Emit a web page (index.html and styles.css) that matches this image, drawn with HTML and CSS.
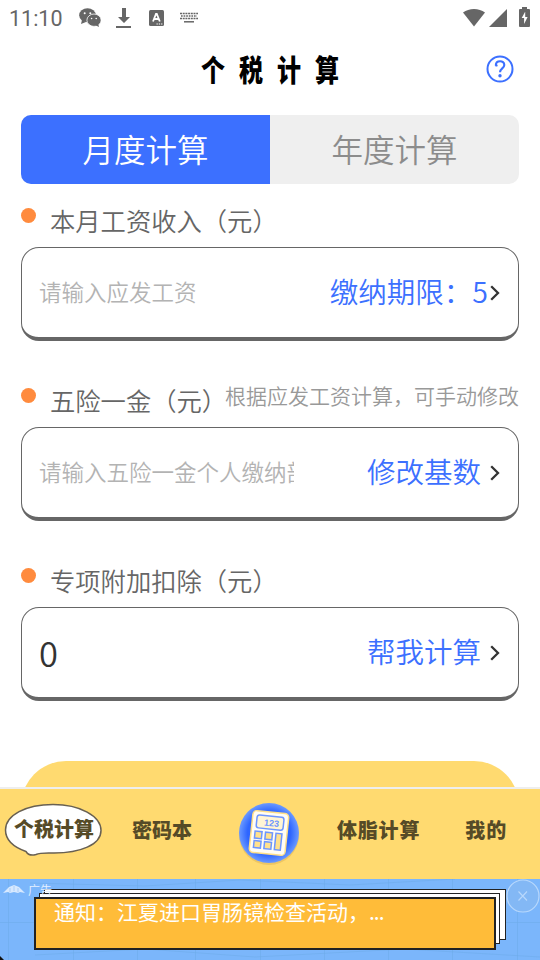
FILE: index.html
```html
<!DOCTYPE html>
<html lang="zh-CN">
<head>
<meta charset="utf-8">
<title>个税计算</title>
<link rel="stylesheet" href="styles.css">
</head>
<body>
<header class="status">
  <span class="clock">11:10</span>
  <svg class="wechat" width="22" height="20" viewBox="0 0 22 20"><g fill="#666"><ellipse cx="8.5" cy="7.3" rx="8.3" ry="7"/><path d="M3 12l-1 4 5-2z"/></g><ellipse cx="15" cy="12.2" rx="7.1" ry="6.2" fill="#666" stroke="#fff" stroke-width=".8"/><path d="M16 17l4 2-1-4z" fill="#666"/><g fill="#fff"><circle cx="5.7" cy="5.3" r="1"/><circle cx="11.3" cy="5.3" r="1"/><circle cx="12.6" cy="10.5" r=".8"/><circle cx="17.2" cy="10.5" r=".8"/></g></svg>
  <svg class="download" width="16" height="22" viewBox="0 0 16 22"><path d="M6 1h4v9h4l-6 6-6-6h4zM0 19h15v2H0z" fill="#666"/></svg>
  <svg class="letter" width="15" height="16" viewBox="0 0 15 16"><rect width="15" height="16" rx="1.5" fill="#666"/><path d="M4 11.5L7 4h.8l3 7.5M5 9h4.8" fill="none" stroke="#fff" stroke-width="1.8"/><path d="M7.5 14h1.3m1 0h1.3m1 0h1.3" stroke="#fff" stroke-width="1.2"/></svg>
  <svg class="keys" width="20" height="12" viewBox="0 0 20 12"><g stroke="#666" stroke-width="1.5"><path d="M1 1.5h18" stroke-dasharray="2 .7"/><path d="M2 4h16" stroke-dasharray="1.7 .9"/><path d="M1 6.5h18" stroke-dasharray="2 .7"/><path d="M5 9.8h10"/></g></svg>
  <span class="grow"></span>
  <svg width="22" height="18" viewBox="0 0 22 18"><path d="M0 3.6C6-1.2 16-1.2 22 3.6L11 17.5z" fill="#666"/></svg>
  <svg class="signal" width="18" height="18" viewBox="0 0 18 18"><path d="M18 0v18H0z" fill="#666"/></svg>
  <svg class="battery" width="11" height="20" viewBox="0 0 11 20"><path d="M3 0h5v2h2q1 0 1 1v16q0 1-1 1H1q-1 0-1-1V3q0-1 1-1h2z" fill="#666"/><path d="M6 5L2.7 11h2.4v6L8.6 10H6.2V5z" fill="#fff"/></svg>
</header>
<div class="titlebar">
  <h1 class="brush">个税计算</h1>
  <svg class="help" width="28" height="28" viewBox="0 0 28 28"><circle cx="14" cy="14" r="12.5" fill="none" stroke="#3c70ff" stroke-width="2"/><path d="M9.8 10.5C9.8 4.8 18.3 5 18.3 10c0 3.3-4.3 3.5-4.3 7.3" fill="none" stroke="#3c70ff" stroke-width="2.1"/><circle cx="10.4" cy="10.4" r="1.2" fill="#3c70ff"/><circle cx="14" cy="20.7" r="1.7" fill="#3c70ff"/></svg>
</div>
<main class="content">
  <nav class="segments"><span class="segment active">月度计算</span><span class="segment">年度计算</span></nav>
  <section class="field">
    <div class="label"><i class="dot"></i><span class="name">本月工资收入（元）</span></div>
    <div class="box"><span class="placeholder">请输入应发工资</span><span class="action">缴纳期限：5</span><svg class="chevron" width="10" height="16" viewBox="0 0 10 16"><path d="M1.2 1.2L8 8l-6.8 6.8" fill="none" stroke="#333" stroke-width="2.3"/></svg></div>
  </section>
  <section class="field">
    <div class="label"><i class="dot"></i><span class="name">五险一金（元）</span><span class="hint">根据应发工资计算，可手动修改</span></div>
    <div class="box spaced"><span class="placeholder">请输入五险一金个人缴纳部分</span><span class="action">修改基数</span><svg class="chevron" width="10" height="16" viewBox="0 0 10 16"><path d="M1.2 1.2L8 8l-6.8 6.8" fill="none" stroke="#333" stroke-width="2.3"/></svg></div>
  </section>
  <section class="field">
    <div class="label"><i class="dot"></i><span class="name">专项附加扣除（元）</span></div>
    <div class="box spaced"><span class="value">0</span><span class="action">帮我计算</span><svg class="chevron" width="10" height="16" viewBox="0 0 10 16"><path d="M1.2 1.2L8 8l-6.8 6.8" fill="none" stroke="#333" stroke-width="2.3"/></svg></div>
  </section>
  <div class="submit"></div>
</main>
<nav class="tabs">
  <div class="tab current">
    <svg class="bubble" width="100" height="54" viewBox="0 0 100 54"><path d="M49 1.5C76 1.5 97 13 97 27.500C97 42 76 50 50 50C42 50 36 49.500 32 51.500Q25 53.500 22 48.500C8 43.500 1.500 36 1.500 27C1.500 12 22 1.500 49 1.500Z" fill="#fff" stroke="#686052" stroke-width="1.5"/></svg>
    <span class="brush tab-text">个税计算</span>
  </div>
  <span class="brush tab-text code">密码本</span>
  <svg class="calculator" width="66" height="68" viewBox="0 0 66 68">
    <defs><radialGradient id="blue"><stop offset=".72" stop-color="#2e66ff"/><stop offset="1" stop-color="#6b9aff"/></radialGradient></defs>
    <ellipse cx="33" cy="35" rx="30" ry="30" fill="#d9ad51" opacity=".45"/>
    <circle cx="33" cy="33" r="30" fill="url(#blue)"/>
    <g transform="rotate(6 33 33)"><rect x="15" y="12" width="36" height="42" rx="4" fill="#fffdf5" stroke="#ffdf87" stroke-width="1.500"/><rect x="19.500" y="16" width="27" height="13" rx="2.500" fill="#fff5d4" stroke="#6d96ff" stroke-width="1.500"/>
    <text class="digits" x="27" y="26">123</text>
    <g fill="#ffe18c" stroke="#6d96ff" stroke-width="1.500"><rect x="19" y="32.500" width="7" height="7"/><rect x="29.500" y="32.500" width="7" height="7"/><rect x="19" y="42" width="7" height="7"/><rect x="29.500" y="42" width="7" height="7"/><rect x="40" y="32.500" width="6" height="16.500"/></g></g>
  </svg>
  <span class="brush tab-text fat">体脂计算</span>
  <span class="brush tab-text mine">我的</span>
</nav>
<aside class="ad">
  <svg class="ad-lines" width="540" height="81" viewBox="0 0 540 81"><g stroke="#6eace9" stroke-width="1" fill="none" opacity=".55"><path d="M8.500 0v81M73.500 0v81M137.500 0v81M195.500 0v81M260.500 0v81M324.500 0v81M388.500 0v81M452.500 0v81M517.500 0v81M0 43.500h540M35 76l110-6 110 8 150-8 135 8M30 4l115 3 95-6 110 5 105-6"/></g><path d="M0 77l4 4H0z" fill="#111"/></svg>
  <div class="sheet sheet-back"></div>
  <div class="sheet sheet-mid"></div>
  <div class="notice">通知：江夏进口胃肠镜检查活动，<span class="dots">...</span></div>
  <div class="ad-tag"><svg width="22" height="10" viewBox="0 0 22 10"><path d="M0 8L6 2l5-2 5 2 6 6-5-1-2 1-4-1-4 1-2-1z" fill="#d7e9ff"/><path d="M7 3v4m4-6v5m4-3v4" stroke="#a9cdf8"/></svg><span>广告</span></div>
  <svg class="close" width="34" height="34" viewBox="0 0 34 34"><circle cx="17" cy="17" r="16" fill="#83b8f5" stroke="#b8d8fc" stroke-width="1.200"/><path d="M12.500 12.500l8.500 9m0-9l-8.500 9" stroke="#b8d8fc" stroke-width="1.100"/></svg>
</aside>
</body>
</html>
```
FILE: styles.css
```css
* { box-sizing: border-box; }
body {
  margin: 0;
  width: 540px;
  height: 960px;
  display: flex;
  flex-direction: column;
  overflow: hidden;
  background: #fff;
  color: #666;
  font-family: "Noto Sans CJK SC", sans-serif;
  font-weight: 350;
  white-space: nowrap;
}
svg { display: block; flex: none; }
.status { height: 36px; flex: none; display: flex; align-items: center; padding: 0 10px 0 9px; }
.clock { font: 400 21.5px/36px Roboto, sans-serif; width: 70px; padding-top: 2px; }
.download { margin-left: 15px; }
.letter { margin-left: 17px; }
.keys { margin-left: 15px; }
.grow { flex: 1; }
.signal { margin-left: 4px; }
.battery { margin-left: 12px; margin-top: -3px; }
.titlebar { height: 79px; flex: none; display: flex; justify-content: space-between; padding: 19px 26px 0 201px; }
.brush { font-family: "Noto Sans CJK SC", sans-serif; font-weight: 900; }
h1 { margin: -5px 0 0; font-size: 30px; line-height: 36px; letter-spacing: 17.5px; color: #000; transform: scaleX(.8); transform-origin: left; }
.content { height: 672px; flex: none; padding: 0 21px; overflow: hidden; }
.segments { display: flex; height: 69px; border-radius: 10px; overflow: hidden; margin-bottom: 17px; background: #efefef; }
.segment { flex: 1; text-align: center; font-size: 31.5px; line-height: 67px; color: #8c8c8c; }
.active { background: #3c70ff; color: #fff; }
.field { height: 140px; margin-bottom: 40px; }
.label { display: flex; height: 46px; }
.dot { width: 15px; height: 15px; margin: 7px 14px 0 0; flex: none; border-radius: 50%; background: #ff8b3e; }
.name { width: 160px; font-size: 25.3px; line-height: 38px; }
.hint { margin-left: auto; font-size: 21px; line-height: 29px; color: #999; }
.box { height: 94px; border: 1px solid #666; border-bottom-width: 4px; border-radius: 18px; display: flex; align-items: center; padding: 0 18px 0 17px; }
.placeholder { width: 255px; overflow: hidden; margin-top: -3px; font-size: 22.5px; line-height: 40px; color: #b3b3b3; }
.value { margin-top: -2px; font-size: 34.5px; line-height: 40px; color: #333; }
.action { margin: -3px 2px 0 auto; font-size: 28.5px; line-height: 40px; color: #3c70ff; }
.spaced .action { margin-right: 9px; }
.submit { height: 90px; margin-top: 60px; border-radius: 45px; background: #ffda70; }
.tabs { height: 92px; flex: none; display: flex; border-top: 2px solid #eee; background: #ffda70; padding: 14px 0 0 4px; color: #564b27; }
.tab-text { font-size: 20px; line-height: 30px; }
.current { position: relative; width: 100px; flex: none; }
.current .tab-text { position: absolute; left: 10px; top: 11px; }
.code { margin: 12px 0 0 28px; }
.calculator { margin: -3px 0 0 44px; }
.fat { margin: 12px 0 0 35px; letter-spacing: .8px; }
.mine { margin: 12px 0 0 45px; letter-spacing: 1px; }
.digits { font: 700 9px "Liberation Sans", sans-serif; fill: #6d96ff; }
.ad { height: 81px; flex: none; position: relative; overflow: hidden; background: #7bb6fb; }
.sheet { position: absolute; background: #fff; border: 1.5px solid #222; }
.sheet-back { left: 44px; top: 10px; width: 462px; height: 51px; }
.sheet-mid { left: 39px; top: 14px; width: 461px; height: 51px; }
.notice { position: absolute; left: 34px; top: 18px; width: 462px; height: 53px; border: 2px solid #222; background: #ffbc39; color: #fff; padding-left: 18px; font-size: 21px; line-height: 25px; font-weight: 400; }
.dots { letter-spacing: -1px; }
.ad-tag { position: absolute; left: 3px; top: 2px; display: flex; align-items: center; gap: 3px; font-size: 12px; line-height: 17px; color: #e6f1ff; }
.close { position: absolute; left: 506px; top: 0; }
```
